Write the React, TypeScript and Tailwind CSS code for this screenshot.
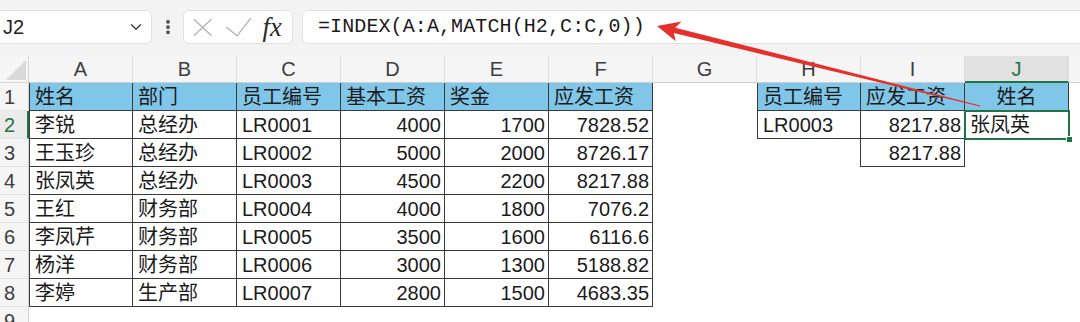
import React from "react";
import { ChevronDown, EllipsisVertical } from "lucide-react";

const COLS = ["A", "B", "C", "D", "E", "F", "G", "H", "I", "J"];

type C = { t?: string; cls?: string; align?: "l" | "r" | "c"; sel?: boolean };

const BLUE = "bg-[#80c6e8] border-r border-b border-[#3a3a3a]";
const DATA = "border-r border-b border-[#3a3a3a]";
const BLUE_L = "bg-[#80c6e8] border-l border-r border-b border-[#3a3a3a]";
const DATA_L = "border-l border-r border-b border-[#3a3a3a]";

const main = [
  ["姓名", "部门", "员工编号", "基本工资", "奖金", "应发工资"],
  ["李锐", "总经办", "LR0001", "4000", "1700", "7828.52"],
  ["王玉珍", "总经办", "LR0002", "5000", "2000", "8726.17"],
  ["张凤英", "总经办", "LR0003", "4500", "2200", "8217.88"],
  ["王红", "财务部", "LR0004", "4000", "1800", "7076.2"],
  ["李凤芹", "财务部", "LR0005", "3500", "1600", "6116.6"],
  ["杨洋", "财务部", "LR0006", "3000", "1300", "5188.82"],
  ["李婷", "生产部", "LR0007", "2800", "1500", "4683.35"],
];

function buildRow(r: number): C[] {
  const cells: C[] = [];
  if (r <= 8) {
    const d = main[r - 1];
    d.forEach((t, i) => {
      const header = r === 1;
      const cls = header ? (i === 0 ? BLUE_L : BLUE) : i === 0 ? DATA_L : DATA;
      const align = !header && i >= 3 ? "r" : "l";
      cells.push({ t, cls, align });
    });
  } else {
    for (let i = 0; i < 6; i++) cells.push({});
  }
  cells.push({});
  if (r === 1) {
    cells.push({ t: "员工编号", cls: BLUE_L, align: "l" });
    cells.push({ t: "应发工资", cls: BLUE, align: "l" });
    cells.push({ t: "姓名", cls: BLUE, align: "c" });
  } else if (r === 2) {
    cells.push({ t: "LR0003", cls: DATA_L, align: "l" });
    cells.push({ t: "8217.88", cls: DATA, align: "r" });
    cells.push({ t: "张凤英", cls: "", align: "l", sel: true });
  } else if (r === 3) {
    cells.push({ cls: "border-r border-[#3a3a3a]" });
    cells.push({ t: "8217.88", cls: DATA, align: "r" });
    cells.push({});
  } else {
    cells.push({});
    cells.push({});
    cells.push({});
  }
  return cells;
}

function Cell({ c }: { c: C }) {
  const al =
    c.align === "r"
      ? "justify-end pr-[3px]"
      : c.align === "c"
      ? "justify-center"
      : "justify-start pl-[5px]";
  return (
    <div
      className={`relative w-[104px] shrink-0 h-full flex items-center text-[20px] text-[#1b1b1b] whitespace-nowrap ${al} ${c.cls ?? ""}`}
    >
      {c.t}
      {c.sel && (
        <>
          <div className="absolute left-[-1px] top-[-1px] right-[-1px] bottom-[-1px] border-2 border-[#217346]" />
          <div className="absolute right-[-4px] bottom-[-4px] w-[7px] h-[7px] bg-[#217346] border border-white" />
        </>
      )}
    </div>
  );
}

export default function App() {
  return (
    <div className="relative w-[1080px] h-[322px] overflow-hidden bg-white font-['Liberation_Sans','Noto_Sans_CJK_SC',sans-serif]">
      {/* toolbar */}
      <div className="h-[56px] bg-[#f3f3f3] flex items-start pt-[10px]">
        <div className="-ml-[8px] w-[160px] h-[34px] shrink-0 bg-white border border-[#e2e2e2] rounded-[6px] flex items-center pl-[10px] pr-[6px]">
          <span className="text-[20px] text-[#222] flex-1">J2</span>
          <ChevronDown size={18} strokeWidth={1.6} color="#333" />
        </div>
        <div className="w-[31px] h-[34px] shrink-0 flex items-center justify-center">
          <EllipsisVertical size={18} strokeWidth={3} color="#444" />
        </div>
        <div className="w-[110px] h-[34px] shrink-0 bg-white border border-[#e2e2e2] rounded-[6px] flex items-center">
          <svg width="110" height="34" viewBox="0 0 110 34">
            <path d="M10 9 L28 26 M28 9 L10 26" stroke="#b5b5b5" strokeWidth="1.4" fill="none" />
            <path d="M43 17 L54 26 L68 8" stroke="#b5b5b5" strokeWidth="1.4" fill="none" />
            <text
              x="80"
              y="26"
              fontFamily="Liberation Serif, serif"
              fontStyle="italic"
              fontSize="27"
              fill="#2a2a2a"
            >
              fx
            </text>
          </svg>
        </div>
        <div className="ml-[9px] flex-1 -mr-[8px] h-[34px] bg-white border border-[#e2e2e2] rounded-[6px] flex items-center pl-[15px]">
          <span className="font-['Liberation_Mono',monospace] text-[20px] text-[#1a1a1a] tracking-[0.1px]">
            =INDEX(A:A,MATCH(H2,C:C,0))
          </span>
        </div>
      </div>

      {/* column headers */}
      <div className="flex h-[27px] bg-[#f5f5f5]">
        <div className="w-[29px] shrink-0 h-full border-b border-r border-[#d4d4d4] relative overflow-hidden">
          <svg width="29" height="27" viewBox="0 0 29 27">
            <path d="M26 4 L26 24 L6 24 Z" fill="#d9d9d9" />
          </svg>
        </div>
        {COLS.map((l) =>
          l === "J" ? (
            <div
              key={l}
              className="w-[104px] shrink-0 h-full flex items-center justify-center bg-[#e1e1e1] border-r border-r-[#dadada] border-b-2 border-b-[#217346] text-[20px] text-[#217346]"
            >
              {l}
            </div>
          ) : (
            <div
              key={l}
              className="w-[104px] shrink-0 h-full flex items-center justify-center border-r border-r-[#dedede] border-b border-b-[#cfcfcf] text-[20px] text-[#3d3d3d]"
            >
              {l}
            </div>
          )
        )}
        <div className="flex-1 h-full border-b border-b-[#cfcfcf]" />
      </div>

      {/* rows */}
      {[1, 2, 3, 4, 5, 6, 7, 8, 9].map((r) => (
        <div key={r} className="flex h-[28px]">
          {r === 2 ? (
            <div className="w-[29px] shrink-0 h-full bg-[#ebebeb] border-b border-b-[#e2e2e2] border-r-2 border-r-[#217346] flex items-center pl-[4px] text-[20px] text-[#217346]">
              {r}
            </div>
          ) : (
            <div className="w-[29px] shrink-0 h-full bg-[#f5f5f5] border-b border-b-[#e4e4e4] border-r border-r-[#d4d4d4] flex items-center pl-[4px] text-[20px] text-[#3d3d3d]">
              {r}
            </div>
          )}
          {buildRow(r).map((c, i) => (
            <Cell key={i} c={c} />
          ))}
        </div>
      ))}

      {/* red arrow annotation */}
      <svg
        className="absolute left-0 top-0 pointer-events-none"
        width="1080"
        height="322"
        viewBox="0 0 1080 322"
      >
        <polygon
          points="657,26 681.5,21.5 675.3,27.7 980.2,105.4 979.8,106.6 673.7,32.9 675.8,41.2"
          fill="#e5302c"
        />
      </svg>
    </div>
  );
}
